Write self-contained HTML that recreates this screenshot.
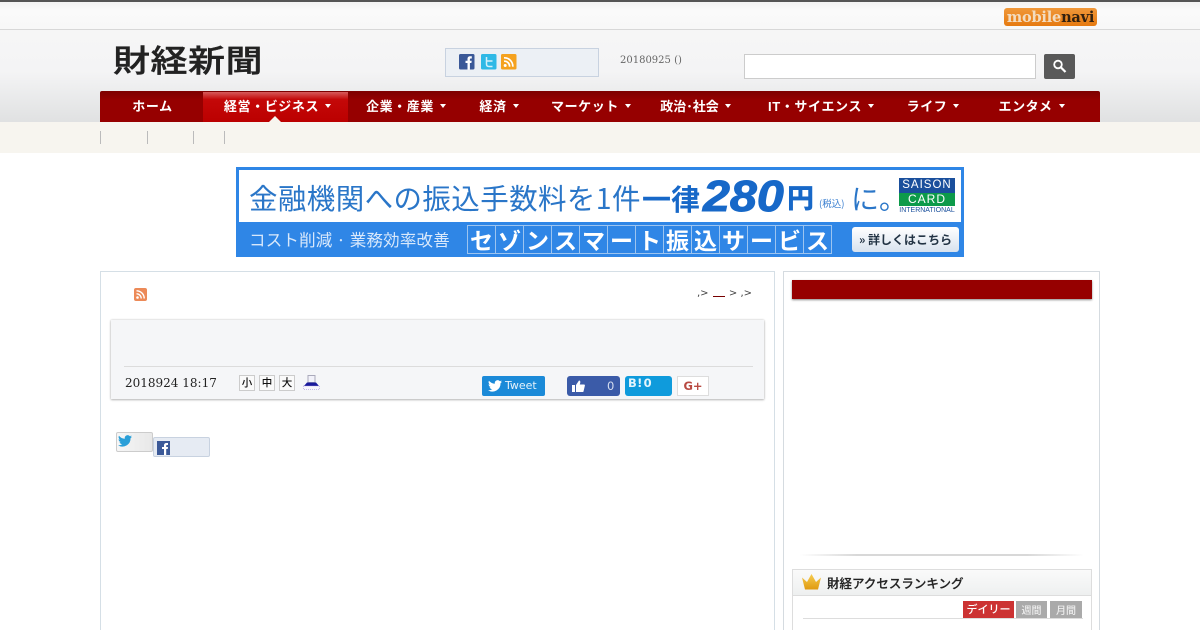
<!DOCTYPE html>
<html lang="ja">
<head>
<meta charset="utf-8">
<title>財経新聞</title>
<style>
html{margin:0;padding:0;background:#fff;width:1200px;height:630px;overflow:hidden}
body{margin:0;padding:0;background:#fff;position:relative;width:1200px;height:630px;overflow:hidden;font-family:"Liberation Sans","Noto Sans CJK JP",sans-serif;color:#222}
#w{position:absolute;left:0;top:0;width:1200px;height:630px;overflow:hidden}
.a{position:absolute;white-space:nowrap}
.nav{top:92px;height:30px;line-height:29px;font-size:13px;font-weight:700;color:#fff;text-align:center;letter-spacing:.6px}
.nav i{display:inline-block;width:0;height:0;border:3px solid transparent;border-top:4px solid #fff;border-bottom:0;margin-left:6px;vertical-align:3px}
.sep{top:131px;width:1px;height:13px;background:#bbb}
.fs{top:375px;width:14px;height:14px;border:1px solid #ccc;background:#fafafa;font:500 10.5px/14px "Noto Sans CJK JP",sans-serif;text-align:center;color:#111}
.cell{display:inline-block;width:27px;height:27px;border:1px solid #9cc4f0;margin-left:-1px;text-align:center;font-weight:700;font-size:23px;line-height:26px;color:#fff}
</style>
</head>
<body>
<div id="w">
<!-- top strip -->
<div class="a" style="left:0;top:0;width:1200px;height:2px;background:#555"></div>
<div class="a" style="left:0;top:2px;width:1200px;height:27px;background:linear-gradient(#f3f3f3,#fafafa 30%,#f8f8f8)"></div>
<div class="a" style="left:0;top:29px;width:1200px;height:1px;background:#d8d8d8"></div>
<div class="a" style="left:0;top:30px;width:1200px;height:92px;background:linear-gradient(#f6f6f6,#f4f4f5 45%,#e0e1e2)"></div>
<!-- mobile navi -->
<div class="a" style="left:1004px;top:8px;width:93px;height:18px;border-radius:3px;background:linear-gradient(#f0983a,#e67a10);font:700 14.5px/19px 'DejaVu Serif','Liberation Serif',serif;text-align:center;color:#f3dcc0;overflow:hidden;letter-spacing:-.2px">mobile<span style="color:#33210f">navi</span></div>
<!-- logo -->
<div class="a" style="left:113px;top:38px;font:500 37px/46px 'Noto Sans CJK JP',sans-serif;color:#222;letter-spacing:.5px;transform:scaleY(.84);transform-origin:0 8px;-webkit-text-stroke:.5px #222">財経新聞</div>
<!-- social box -->
<div class="a" style="left:445px;top:48px;width:152px;height:27px;border:1px solid #c8d2e0;background:#ecf0f5"></div>
<svg class="a" style="left:459px;top:54px" width="58" height="16" viewBox="0 0 58 16">
<rect width="15.500" height="15.500" rx="1.500" fill="#3b5998"/><path d="M8.500 15.500V9H6.500V6.700H8.500V5C8.500 3.200 9.600 2.300 11.200 2.300H12.800V4.500H11.700C11 4.500 10.900 4.900 10.900 5.400V6.700H12.700L12.400 9H10.900V15.500Z" fill="#fff"/>
<rect x="22" width="15.500" height="15.500" rx="1.500" fill="#2fb9e6"/><path d="M27.500 3V10C27.500 11.800 28.500 12.500 30 12.500H33.500M27.500 7H33.500" fill="none" stroke="#d4f0fa" stroke-width="1.500"/>
<rect x="42" width="15.500" height="15.500" rx="1.500" fill="#f5a21f"/><circle cx="46.200" cy="11.500" r="1.500" fill="#fff"/><path d="M45 7.200A5 5 0 0 1 50.500 12.700M45 3.800A8.500 8.500 0 0 1 53.800 12.700" fill="none" stroke="#fff" stroke-width="1.700"/>
</svg>
<div class="a" style="left:620px;top:54px;font:10px/14px 'DejaVu Serif',serif;color:#666">20180925 ()</div>
<!-- search -->
<div class="a" style="left:744px;top:54px;width:290px;height:23px;background:#fff;border:1px solid #ccc"></div>
<div class="a" style="left:1044px;top:54px;width:31px;height:25px;background:#595959;border-radius:2px"></div>
<svg class="a" style="left:1052px;top:59px" width="16" height="15" viewBox="0 0 16 15"><circle cx="6" cy="5.500" r="3.800" fill="none" stroke="#fff" stroke-width="1.800"/><path d="M9 8.500L13.500 13" stroke="#fff" stroke-width="2.200"/></svg>
<!-- sub nav -->
<div class="a" style="left:0;top:122px;width:1200px;height:31px;background:#f7f5ef"></div>
<div class="a sep" style="left:100px"></div>
<div class="a sep" style="left:147px"></div>
<div class="a sep" style="left:193px"></div>
<div class="a sep" style="left:224px"></div>
<!-- main nav -->
<div class="a" style="left:100px;top:91px;width:1000px;height:31px;background:linear-gradient(#7d0000,#960000 30%,#960000);border-radius:2px 2px 0 0"></div>
<div class="a" style="left:203px;top:92px;width:145px;height:30px;background:linear-gradient(#d65a5a,#c40808 25%,#bb0000)"></div>
<div class="a" style="left:269px;top:116px;width:0;height:0;border:6px solid transparent;border-bottom:6px solid #f7f5ef;border-top:0"></div>
<div class="a nav" style="left:101px;width:103px">ホーム</div>
<div class="a nav" style="left:205px;width:145px">経営・ビジネス<i></i></div>
<div class="a nav" style="left:348px;width:116px">企業・産業<i></i></div>
<div class="a nav" style="left:464px;width:70px">経済<i></i></div>
<div class="a nav" style="left:534px;width:114px">マーケット<i></i></div>
<div class="a nav" style="left:648px;width:95px;letter-spacing:0">政治･社会<i></i></div>
<div class="a nav" style="left:746px;width:150px">IT・サイエンス<i></i></div>
<div class="a nav" style="left:893px;width:80px">ライフ<i></i></div>
<div class="a nav" style="left:974px;width:115px">エンタメ<i></i></div>
<!-- banner -->
<div class="a" style="left:236px;top:167px;width:728px;height:90px;background:#2f86e6"></div>
<div class="a" style="left:239px;top:170px;width:722px;height:52px;background:#fff"></div>
<div class="a" style="left:249px;top:178px;font:400 28.500px/40px 'Noto Sans CJK JP',sans-serif;color:#2a76c8;letter-spacing:.4px">金融機関への振込手数料を1件</div>
<div class="a" style="left:642px;top:178px;font:700 29px/40px 'Noto Sans CJK JP',sans-serif;color:#1768c8">一律</div>
<div class="a" style="left:703px;top:172px;font:italic 700 44px/50px 'Liberation Sans',sans-serif;color:#1768c8;-webkit-text-stroke:1px #1768c8;transform:scaleX(1.1);transform-origin:0 0">280</div>
<div class="a" style="left:787px;top:179px;font:900 27px/36px 'Noto Sans CJK JP',sans-serif;color:#1768c8">円</div>
<div class="a" style="left:819px;top:196px;font:400 9.500px/14px 'Noto Sans CJK JP',sans-serif;color:#3a7fd0">(税込)</div>
<div class="a" style="left:851px;top:178px;font:400 28px/40px 'Noto Sans CJK JP',sans-serif;color:#2a76c8">に。</div>
<div class="a" style="left:899px;top:178px;width:56px;height:15px;background:#1a4f9c;color:#fff;font:11.500px/15px 'Liberation Sans',sans-serif;text-align:center;letter-spacing:1px">SAISON</div>
<div class="a" style="left:899px;top:193px;width:56px;height:13px;background:#0d9a4a;color:#fff;font:12px/13px 'Liberation Sans',sans-serif;text-align:center;letter-spacing:1px">CARD</div>
<div class="a" style="left:899px;top:206px;width:56px;font:7px/9px 'Liberation Sans',sans-serif;text-align:center;color:#1a4f9c">INTERNATIONAL</div>
<div class="a" style="left:249px;top:226px;font:400 16.500px/26px 'Noto Sans CJK JP',sans-serif;color:#d8e8fb;letter-spacing:.2px">コスト削減 · 業務効率改善</div>
<div class="a" style="left:468px;top:225px;font-family:'Noto Sans CJK JP',sans-serif"><span class="cell">セ</span><span class="cell">ゾ</span><span class="cell">ン</span><span class="cell">ス</span><span class="cell">マ</span><span class="cell">ー</span><span class="cell">ト</span><span class="cell">振</span><span class="cell">込</span><span class="cell">サ</span><span class="cell">ー</span><span class="cell">ビ</span><span class="cell">ス</span></div>
<div class="a" style="left:852px;top:227px;width:107px;height:25px;border-radius:3px;background:linear-gradient(#fff,#d8e2ee);font:700 12px/25px 'Noto Sans CJK JP',sans-serif;text-align:center;color:#234">» 詳しくはこちら</div>
<!-- left column -->
<div class="a" style="left:100px;top:271px;width:673px;height:370px;border:1px solid #d5dfe6;background:#fff"></div>
<svg class="a" style="left:134px;top:288px" width="13" height="13" viewBox="0 0 13 13"><rect width="13" height="13" rx="2" fill="#ec8a58"/><circle cx="3.500" cy="9.500" r="1.300" fill="#fff"/><path d="M2.500 5.800A4.700 4.700 0 0 1 7.200 10.500M2.500 2.800A7.700 7.700 0 0 1 10.200 10.500" fill="none" stroke="#fff" stroke-width="1.400"/></svg>
<div class="a" style="left:697px;top:287px;font:10px/14px 'DejaVu Sans',sans-serif;color:#444">,&gt; <span style="display:inline-block;width:12px;height:1px;background:#700;vertical-align:-1px;margin:0 1px"></span> &gt; ,&gt;</div>
<div class="a" style="left:111px;top:320px;width:653px;height:79px;background:#f5f6f8;box-shadow:0 1px 2px #bbb,0 0 2px #c4c4c4"></div>
<div class="a" style="left:124px;top:366px;width:629px;height:1px;background:#dcdcdc"></div>
<div class="a" style="left:125px;top:375px;font:12px/16px 'DejaVu Serif',serif;color:#222">2018924 18:17</div>
<div class="a fs" style="left:239px">小</div>
<div class="a fs" style="left:259px">中</div>
<div class="a fs" style="left:279px">大</div>
<svg class="a" style="left:303px;top:375px" width="17" height="15" viewBox="0 0 17 15"><rect x="5" y="0.500" width="7" height="7" fill="#f2f2fa" stroke="#aab"/><path d="M1 11L4 7.500H13L16 11Z" fill="#1a1a9c"/><rect x="0.500" y="11" width="16" height="3.500" fill="#f8f6fc" stroke="#b9a8e0" stroke-width=".7" stroke-dasharray="1 1"/></svg>
<!-- share buttons -->
<div class="a" style="left:482px;top:376px;width:63px;height:20px;border-radius:2px;background:#1b8ad8;color:#e6f2fb;font:11px/20px 'DejaVu Sans',sans-serif"><span style="position:absolute;left:23px">Tweet</span></div>
<svg class="a" style="left:488px;top:380px" width="14" height="12" viewBox="0 0 24 20"><path d="M24 2.400a10 10 0 0 1-2.800.8A5 5 0 0 0 23.300.5a10 10 0 0 1-3.100 1.200A4.900 4.900 0 0 0 11.800 6.200 14 14 0 0 1 1.700.9a4.900 4.900 0 0 0 1.500 6.600 5 5 0 0 1-2.200-.6c0 2.400 1.700 4.400 3.900 4.900a5 5 0 0 1-2.200.1 4.900 4.900 0 0 0 4.600 3.400A10 10 0 0 1 0 17.300 14 14 0 0 0 21.500 5a10 10 0 0 0 2.500-2.600z" fill="#fff"/></svg>
<div class="a" style="left:567px;top:376px;width:53px;height:20px;border-radius:3px;background:#3b5ba8"></div>
<svg class="a" style="left:572px;top:380px" width="13" height="12" viewBox="0 0 13 12"><rect x="0" y="5" width="3" height="7" fill="#fff"/><path d="M4 5L7 0.500C8.200 0.500 8.500 1.500 8.200 3L7.800 4.500H12C13 4.500 13 5.500 12.800 6L11.500 11.500C11.300 12 11 12 10.500 12H4Z" fill="#fff"/></svg>
<div class="a" style="left:607px;top:380px;font:11.500px/13px 'DejaVu Sans',sans-serif;color:#d6def0">0</div>
<div class="a" style="left:625px;top:376px;width:47px;height:20px;border-radius:3px;background:#0f9bdc"></div>
<div class="a" style="left:628px;top:376px;font:700 11.500px/14px 'DejaVu Sans',sans-serif;color:#e4f5fc;letter-spacing:.3px">B!<span style="margin-left:1px">0</span></div>
<div class="a" style="left:677px;top:376px;width:30px;height:18px;border:1px solid #ddd;background:#fff;font:700 11.500px/19px 'DejaVu Sans',sans-serif;text-align:center;color:#b84a42">G+</div>
<!-- small social -->
<div class="a" style="left:116px;top:432px;width:35px;height:18px;border:1px solid #ccc;border-radius:2px;background:linear-gradient(90deg,#f6f6f6,#e8e8e8)"></div>
<svg class="a" style="left:118px;top:435px" width="14" height="12" viewBox="0 0 24 20"><path d="M24 2.400a10 10 0 0 1-2.800.8A5 5 0 0 0 23.300.5a10 10 0 0 1-3.100 1.200A4.900 4.900 0 0 0 11.800 6.200 14 14 0 0 1 1.700.9a4.900 4.900 0 0 0 1.500 6.600 5 5 0 0 1-2.200-.6c0 2.400 1.700 4.400 3.900 4.900a5 5 0 0 1-2.200.1 4.900 4.900 0 0 0 4.600 3.400A10 10 0 0 1 0 17.300 14 14 0 0 0 21.500 5a10 10 0 0 0 2.500-2.600z" fill="#2a9fd8"/></svg>
<div class="a" style="left:153px;top:437px;width:55px;height:18px;border:1px solid #c8d2e0;border-radius:2px;background:#e6ebf3"></div>
<svg class="a" style="left:157px;top:441px" width="13" height="14" viewBox="0 0 13 14"><rect width="13" height="14" fill="#3b5998"/><path d="M7 14V8H5V6H7V4.300C7 2.800 8 2 9.300 2H11V4H10C9.400 4 9.200 4.300 9.200 4.800V6H11L10.700 8H9.200V14Z" fill="#fff"/></svg>
<!-- right column -->
<div class="a" style="left:783px;top:271px;width:315px;height:370px;border:1px solid #d5dbe0;background:#fff"></div>
<div class="a" style="left:792px;top:280px;width:300px;height:19px;background:#960000;box-shadow:0 1px 2px #888"></div>
<div class="a" style="left:800px;top:554px;width:284px;height:2px;background:linear-gradient(90deg,#fff,#d8d8d8 20%,#d8d8d8 80%,#fff)"></div>
<div class="a" style="left:792px;top:569px;width:298px;height:70px;border:1px solid #ddd;background:#fff"></div>
<div class="a" style="left:793px;top:570px;width:298px;height:25px;background:linear-gradient(#fafafa,#eef0f0);border-bottom:1px solid #ddd"></div>
<svg class="a" style="left:802px;top:574px" width="19" height="16" viewBox="0 0 19 16"><defs><linearGradient id="g" x1="0" y1="0" x2="0" y2="1"><stop offset="0" stop-color="#f6cc50"/><stop offset="1" stop-color="#e09a10"/></linearGradient></defs><path d="M0 3.500L5 8L9.500 0L14 8L19 3.500L16 15.500H3Z" fill="url(#g)"/></svg>
<div class="a" style="left:827px;top:574px;font:500 12.500px/18px 'Noto Sans CJK JP',sans-serif;color:#222;-webkit-text-stroke:.2px #222">財経アクセスランキング</div>
<div class="a" style="left:963px;top:601px;width:51px;height:17px;background:#cc3333;color:#fff;font:500 11px/17px 'Noto Sans CJK JP',sans-serif;text-align:center">デイリー</div>
<div class="a" style="left:1016px;top:601px;width:31px;height:17px;background:#aaa;color:#eee;font:500 10px/17px 'Noto Sans CJK JP',sans-serif;text-align:center">週間</div>
<div class="a" style="left:1050px;top:601px;width:32px;height:17px;background:#aaa;color:#eee;font:500 10px/17px 'Noto Sans CJK JP',sans-serif;text-align:center">月間</div>
<div class="a" style="left:803px;top:618px;width:280px;height:1px;background:#ddd"></div>
</div>
</body>
</html>
